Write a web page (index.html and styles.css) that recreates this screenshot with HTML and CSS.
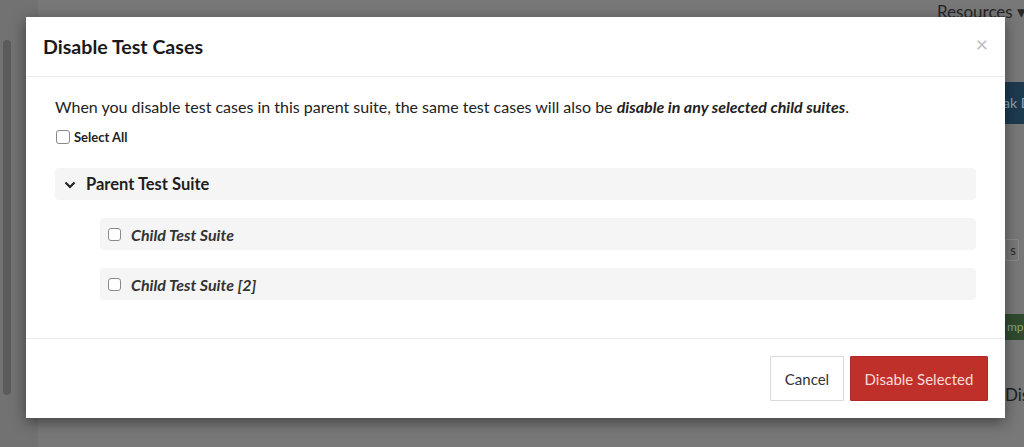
FILE: index.html
```html
<!DOCTYPE html>
<html>
<head>
<meta charset="utf-8">
<link rel="stylesheet" href="styles.css">
</head>
<body>
<div class="page">
  <div class="rail"><div class="scroll"></div></div>
  <div class="main">
    <div class="topnav"><span>Resources ▾</span></div>
    <div class="side">
      <div class="bluebtn">ak D</div>
      <div class="smallbtn">s</div>
      <div class="badge">mple</div>
      <div class="dis">Dis</div>
    </div>
  </div>
</div>

<div class="modal">
  <div class="modal-header">
    <h2 class="title">Disable Test Cases</h2>
    <span class="close">×</span>
  </div>
  <div class="modal-body">
    <p class="intro">When you disable test cases in this parent suite, the same test cases will also be <b><i>disable in any selected child suites</i></b>.</p>
    <label class="select-all"><span class="cb"></span>Select All</label>
    <div class="tree">
      <div class="row parent">
        <svg class="chev" width="12" height="8" viewBox="0 0 12 8"><path d="M1.5 1.5 L6 6 L10.5 1.5" fill="none" stroke="#222" stroke-width="2.2"/></svg>
        <span>Parent Test Suite</span>
      </div>
      <div class="row child"><span class="cb"></span><span class="child-name">Child Test Suite</span></div>
      <div class="row child"><span class="cb"></span><span class="child-name">Child Test Suite [2]</span></div>
    </div>
  </div>
  <div class="modal-footer">
    <button class="btn cancel">Cancel</button>
    <button class="btn danger">Disable Selected</button>
  </div>
</div>
</body>
</html>
```

FILE: styles.css
```css
* { box-sizing: border-box; }
html, body { margin: 0; padding: 0; }
body {
  width: 1024px;
  height: 447px;
  overflow: hidden;
  background: #777777;
  font-family: Lato, "Open Sans", sans-serif;
  position: relative;
}
.page {
  display: flex;
  height: 447px;
}
.rail {
  width: 38px;
  background: #727272;
  padding: 40px 0 0 3px;
}
.scroll {
  width: 8px;
  height: 355px;
  border-radius: 4px;
  background: #5a5c5c;
}
.main {
  flex: 1;
  min-width: 0;
  background: #787878;
  display: flex;
  flex-direction: column;
}
.topnav {
  padding: 1px 0 0 899px;
  height: 24px;
  font-size: 17px;
  color: #262626;
  white-space: nowrap;
  overflow: hidden;
}
.side {
  margin-left: auto;
  width: 19px;
  display: flex;
  flex-direction: column;
  overflow: hidden;
}
.bluebtn {
  margin-top: 58px;
  height: 42px;
  width: 40px;
  margin-left: -2px;
  background: #1d3a4f;
  color: #8fa3b3;
  font-size: 14px;
  line-height: 42px;
  white-space: nowrap;
  border-radius: 3px 0 0 3px;
}
.smallbtn {
  margin-top: 115px;
  height: 22px;
  width: 14px;
  border: 1px solid #8a8a8a;
  border-radius: 2px;
  font-size: 13px;
  line-height: 20px;
  color: #2a2a2a;
  text-align: right;
  padding-right: 2px;
}
.badge {
  margin-top: 53px;
  height: 26px;
  width: 30px;
  background: #2f4a2f;
  color: #8aa28a;
  font-size: 12px;
  line-height: 26px;
  white-space: nowrap;
  padding-left: 2px;
}
.dis {
  margin-top: 44px;
  font-size: 17px;
  color: #1e1e1e;
  white-space: nowrap;
}

.modal {
  position: absolute;
  left: 26px;
  top: 17px;
  width: 979px;
  height: 401px;
  background: #fff;
  box-shadow: 0 4px 14px rgba(0, 0, 0, 0.45);
  display: flex;
  flex-direction: column;
}
.modal-header {
  height: 60px;
  padding: 0 17px;
  border-bottom: 1px solid #ececec;
  display: flex;
  align-items: center;
  justify-content: space-between;
}
.title {
  margin: 0;
  font-size: 19.6px;
  font-weight: 700;
  color: #1a1a1a;
}
.close {
  font-size: 21px;
  color: #bdbdbd;
  line-height: 1;
  margin-top: -6px;
}
.modal-body {
  flex: 1;
  padding: 19px 30px 0 29px;
}
.intro {
  margin: 0;
  font-size: 16px;
  color: #222;
  line-height: 22px;
}
.intro b { font-weight: 700; }
.select-all {
  display: flex;
  align-items: center;
  margin-top: 11px;
  font-size: 13px;
  font-weight: 700;
  color: #1f1f1f;
}
.select-all .cb { margin-right: 4px; margin-left: 1px; width: 14px; height: 14px; }
.cb {
  display: inline-block;
  width: 13px;
  height: 13px;
  border: 1px solid #8a8a8a;
  border-radius: 3px;
  background: #fff;
  flex: none;
}
.tree {
  margin-top: 23px;
  display: flex;
  flex-direction: column;
  gap: 18px;
}
.row {
  height: 32px;
  background: #f5f5f5;
  border-radius: 4px;
  display: flex;
  align-items: center;
  color: #1f1f1f;
  margin-right: -1px;
}
.parent {
  font-size: 16.5px;
  font-weight: 700;
  padding-left: 9px;
}
.chev { margin-right: 10px; margin-top: 1px; }
.child {
  margin-left: 45px;
  padding-left: 8px;
  font-size: 16px;
  font-weight: 700;
  font-style: italic;
  color: #333;
}
.child .cb { margin-right: 10px; }
.modal-footer {
  height: 80px;
  border-top: 1px solid #ececec;
  display: flex;
  justify-content: flex-end;
  align-items: center;
  gap: 6px;
  padding: 0 17px;
}
.btn {
  height: 45px;
  font-family: Lato, "Open Sans", sans-serif;
  font-size: 15px;
  border-radius: 1px;
  cursor: pointer;
}
.cancel {
  width: 74px;
  background: #fff;
  border: 1px solid #dadada;
  color: #333;
}
.danger {
  width: 138px;
  background: #c0302a;
  border: 1px solid #b0282a;
  color: #f7dcd8;
}
```
